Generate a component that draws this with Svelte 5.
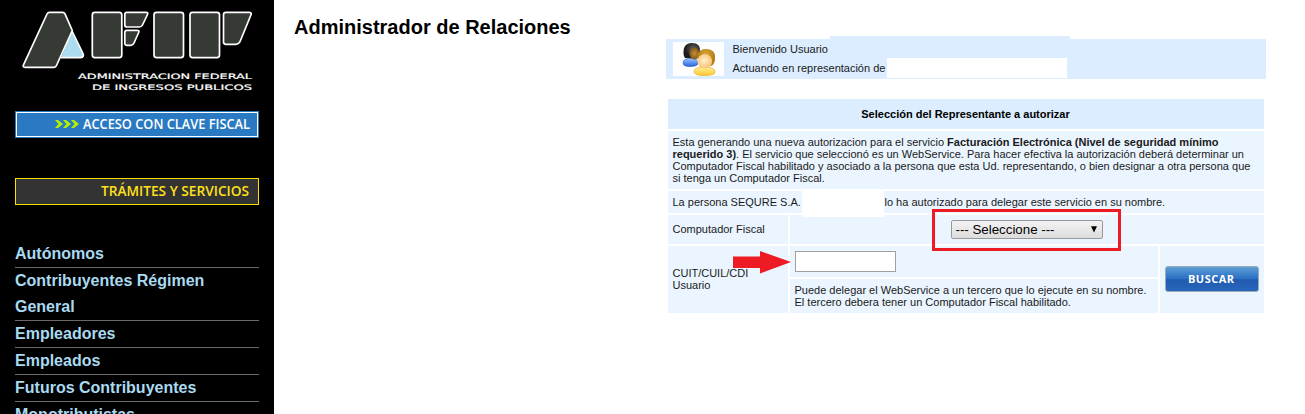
<script>
  const sections = [
    'Autónomos',
    'Contribuyentes Régimen General',
    'Empleadores',
    'Empleados',
    'Futuros Contribuyentes',
    'Monotributistas'
  ];
  let cuit = $state('');
</script>

<div class="page">
  <aside>
    <svg class="logo" width="244" height="96" viewBox="15 0 244 96">
      <g fill="#363a35" stroke="#fff" stroke-width="1.7" stroke-linejoin="round">
        <path d="M72 31L61 57.700H80.500Q84.500 57 83 53.500Z" fill="#addcf0" stroke="none" />
        <path d="M72 31L83 53.500Q84.500 57 80.500 57.700H61" fill="none" />
        <path d="M49.500 12.300H62.500Q64.300 12.300 65 13.800L72.300 30.500L56.500 65.500Q55.700 67.300 54 67.300H25Q22.300 67.300 23.500 64.800L47 14Q47.800 12.300 49.500 12.300Z" />
        <rect x="92.300" y="12.300" width="29.500" height="45.300" rx="2.500" />
        <path d="M127 12.300H146Q148.500 12.300 147.500 14.500L142.500 25Q141.500 27 139.500 27H127Q124.800 27 124.800 25V14.500Q124.800 12.300 127 12.300Z" />
        <path d="M127 30.300H137Q139.700 30.300 138.700 32.500L134 43Q133 45.300 131 45.300H127Q124.800 45.300 124.800 43V32.500Q124.800 30.300 127 30.300Z" />
        <rect x="154" y="12.300" width="29.500" height="45.300" rx="2.500" />
        <rect x="190" y="12.300" width="29.500" height="45.300" rx="2.500" />
        <path d="M226 12.300H249Q252 12.300 251 14.800L240.500 40.500Q239 44.300 235.500 44.300H226Q223.500 44.300 223.500 42V14.500Q223.500 12.300 226 12.300Z" />
      </g>
      <g class="tagline">
        <text x="78" y="79" textLength="174" lengthAdjust="spacingAndGlyphs">ADMINISTRACION FEDERAL</text>
        <text x="92" y="90" textLength="160" lengthAdjust="spacingAndGlyphs">DE INGRESOS PUBLICOS</text>
      </g>
    </svg>

    <a class="access" href="#clave" aria-label="Acceso con clave fiscal">
      <svg width="244" height="27" viewBox="0 0 244 27">
        <rect width="244" height="27" fill="#2878be" />
        <rect x="1.500" y="1.500" width="241" height="24" fill="#297ac2" stroke="#fff" />
        <g fill="#b4f000">
          <path d="M40 9H43L48 13L43 17H40L43.500 13ZM48 9H51L56 13L51 17H48L51.500 13ZM56 9H59L64 13L59 17H56L59.500 13Z" />
        </g>
        <text x="68" y="18" textLength="167" lengthAdjust="spacingAndGlyphs">ACCESO CON CLAVE FISCAL</text>
      </svg>
    </a>

    <a class="services" href="#tramites" aria-label="Trámites y servicios">
      <svg width="244" height="27" viewBox="0 0 244 27">
        <rect x=".5" y=".5" width="243" height="26" fill="#333" stroke="#ffe100" />
        <text x="86" y="18" textLength="148" lengthAdjust="spacingAndGlyphs">TRÁMITES Y SERVICIOS</text>
      </svg>
    </a>

    <nav>
      {#each sections as section}
        <a href="#seccion">{section}</a>
      {/each}
    </nav>
  </aside>

  <main>
    <h1>Administrador de Relaciones</h1>

    <section class="content">
      <header class="welcome">
        <i class="tab"></i>
        <div class="avatar">
          <svg width="51" height="34" viewBox="0 0 51 34">
            <defs>
              <linearGradient id="blue" x2="0" y2="1"><stop stop-color="#9bc4ff" /><stop offset="1" stop-color="#2861dd" /></linearGradient>
              <linearGradient id="gold" x2="0" y2="1"><stop stop-color="#fff09a" /><stop offset="1" stop-color="#ffc72c" /></linearGradient>
              <radialGradient id="dark" cx=".6" cy=".4"><stop stop-color="#666" /><stop offset="1" stop-color="#1c1c1c" /></radialGradient>
              <radialGradient id="hair" cx=".5" cy=".3"><stop stop-color="#dca63a" /><stop offset="1" stop-color="#b07c14" /></radialGradient>
              <radialGradient id="face" cx=".45" cy=".45"><stop stop-color="#fff0c8" /><stop offset="1" stop-color="#f9c680" /></radialGradient>
              <radialGradient id="tan"><stop stop-color="#c58f3b" /><stop offset="1" stop-color="#845714" /></radialGradient>
            </defs>
            <path d="M10 21Q10 16.500 17 16.500Q25 16 25 21Q25 24.500 17 24.500Q10 24.500 10 21Z" fill="url(#blue)" stroke="#3466bd" stroke-width=".7" />
            <path d="M12 16Q9.500 13 11 6Q13 1 19 1Q28 1 27 10L25 16Z" fill="url(#dark)" />
            <ellipse cx="21.500" cy="11.500" rx="5" ry="6" fill="url(#tan)" />
            <path d="M21 29.500Q21 25 31 25Q42 25 42 30Q42 33.500 31 33.500Q21 33.500 21 29.500Z" fill="url(#gold)" stroke="#e6ac22" stroke-width=".7" />
            <path d="M24 15Q25 7 33 7Q42 7 42 15Q42 23 38 24H28Z" fill="url(#hair)" />
            <ellipse cx="31.800" cy="19.300" rx="7.300" ry="7.300" fill="url(#face)" />
          </svg>
        </div>
        <div class="identity">
          <p>Bienvenido Usuario</p>
          <p>Actuando en representación de</p>
        </div>
        <i class="blank-name"></i>
      </header>

      <div class="grid">
        <div class="title wide">Selección del Representante a autorizar</div>
        <div class="cell wide intro">
          Esta generando una nueva autorizacion para el servicio <b>Facturación Electrónica (Nivel de seguridad mínimo<br />requerido 3)</b>. El servicio que seleccionó es un WebService. Para hacer efectiva la autorización deberá determinar un<br />Computador Fiscal habilitado y asociado a la persona que esta Ud. representando, o bien designar a otra persona que<br />si tenga un Computador Fiscal.
        </div>
        <div class="cell wide person">
          <span>La persona SEQURE S.A.</span><i class="blank-id"></i><span>lo ha autorizado para delegar este servicio en su nombre.</span>
        </div>
        <div class="cell label">Computador Fiscal</div>
        <div class="cell computer">
          <button class="select"><span>--- Seleccione ---</span><svg width="8" height="7" viewBox="0 0 8 7"><path d="M1 .3H7L4 6.500Z" /></svg></button>
          <i class="highlight"></i>
        </div>
        <div class="cell user label"><span>CUIT/CUIL/CDI<br />Usuario</span>
          <svg class="arrow" width="58" height="23" viewBox="0 0 58 23"><path d="M0 5.500H27V0L58 11L27 22.500V17H0Z" fill="#ed1c24" /></svg>
        </div>
        <div class="cell entry"><input bind:value={cuit} aria-label="CUIT" /></div>
        <div class="cell search">
          <button class="find" aria-label="Buscar">
            <svg width="94" height="26" viewBox="0 0 94 26">
              <defs><linearGradient id="btn" x2="0" y2="1"><stop stop-color="#60a0d4" /><stop offset=".48" stop-color="#2b70c4" /><stop offset=".53" stop-color="#215bae" /><stop offset="1" stop-color="#2867bd" /></linearGradient></defs>
              <rect x=".5" y=".5" width="93" height="25" rx="2.500" fill="url(#btn)" stroke="#9caab5" />
              <text x="23" y="17" textLength="46">BUSCAR</text>
            </svg>
          </button>
        </div>
        <div class="cell note">Puede delegar el WebService a un tercero que lo ejecute en su nombre.<br />El tercero debera tener un Computador Fiscal habilitado.</div>
      </div>
    </section>
  </main>
</div>

<style>
  :global(body) { margin: 0; background: #fff; overflow: hidden; }
  .page { display: flex; height: 414px; overflow: hidden; font-family: 'Liberation Sans', Arial, sans-serif; color: #1a1a1a; }
  aside { width: 244px; padding: 0 15px; background: #000; flex: none; }
  svg { display: block; }
  .tagline { fill: #fff; stroke: #fff; stroke-width: .2; font: 7.500px 'DejaVu Sans', sans-serif; }
  .access { display: block; margin-top: 15px; }
  .services { display: block; margin-top: 40px; }
  .access text { fill: #fff; font: 600 14px 'Open Sans', sans-serif; }
  .services text { fill: #ffe11a; font: 600 13.500px 'Open Sans', sans-serif; }
  nav { margin-top: 36px; }
  nav a { display: block; font-size: 16px; font-weight: bold; line-height: 26px; color: #a9daf0; text-decoration: none; border-bottom: 1px solid #696969; }
  main { flex: 1; display: flex; align-items: flex-start; padding-left: 20px; }
  h1 { width: 372px; margin: 15px 0 0; font-size: 20px; line-height: 24px; color: #000; }
  .content { width: 600px; padding-top: 39px; font-size: 11px; line-height: 12px; }
  .welcome { position: relative; display: flex; height: 40px; background: #dbedff; }
  .tab { position: absolute; left: 164px; top: -3px; width: 240px; height: 3px; background: #dbedff; }
  .blank-name { position: absolute; left: 221px; top: 19px; width: 180px; height: 20px; background: #fff; }
  .avatar { margin: 3px 0 0 7px; width: 51px; height: 34px; background: #fff; }
  .identity { margin: 1px 0 0 8.500px; }
  p { margin: 0; line-height: 19px; white-space: nowrap; }
  .grid { margin: 20px 2px 0; display: grid; grid-template-columns: 120px 368px 104px; grid-template-rows: 30px 58px 22px 29px 31px 34px; gap: 2px; }
  .title { background: #dbedff; font-weight: bold; color: #000; display: flex; align-items: center; justify-content: center; padding-right: 1px; }
  .cell { box-sizing: border-box; background: #eaf5ff; padding: 0 4.500px; display: flex; align-items: center; position: relative; white-space: nowrap; }
  .wide { grid-column: 1 / -1; }
  .intro { display: block; padding-top: 5px; }
  .label { padding-bottom: 2px; }
  .blank-id { align-self: flex-start; width: 82px; height: 26px; margin: 0 .6px 0 1px; background: #fff; position: relative; z-index: 1; }
  .computer { grid-column: 2 / -1; justify-content: center; padding-right: 5.500px; }
  .select { box-sizing: border-box; width: 152px; height: 19px; padding: 0 4px; display: flex; align-items: center; justify-content: space-between; border: 1px solid #999; border-radius: 2px; background: linear-gradient(#f3f3f3, #dcdcdc); font: 13.300px 'Liberation Sans', Arial, sans-serif; color: #000; }
  .highlight { position: absolute; box-sizing: border-box; left: 142px; top: -6px; width: 189px; height: 42px; border: 3px solid #ed1c24; z-index: 2; }
  .user { grid-row: 5 / 7; grid-column: 1; }
  .arrow { position: absolute; left: 65px; top: 5px; z-index: 2; }
  .entry { grid-column: 2; }
  input { box-sizing: border-box; width: 101px; height: 21px; padding: 1px 3px; border: 1px solid #a0a0a0; background: #fff; }
  .search { grid-column: 3; grid-row: 5 / 7; padding-bottom: 2px; }
  .find { border: 0; padding: 0; background: none; }
  .find text { fill: #fff; font: 700 11px 'Open Sans', sans-serif; }
  .note { grid-column: 2; grid-row: 6; }
</style>
